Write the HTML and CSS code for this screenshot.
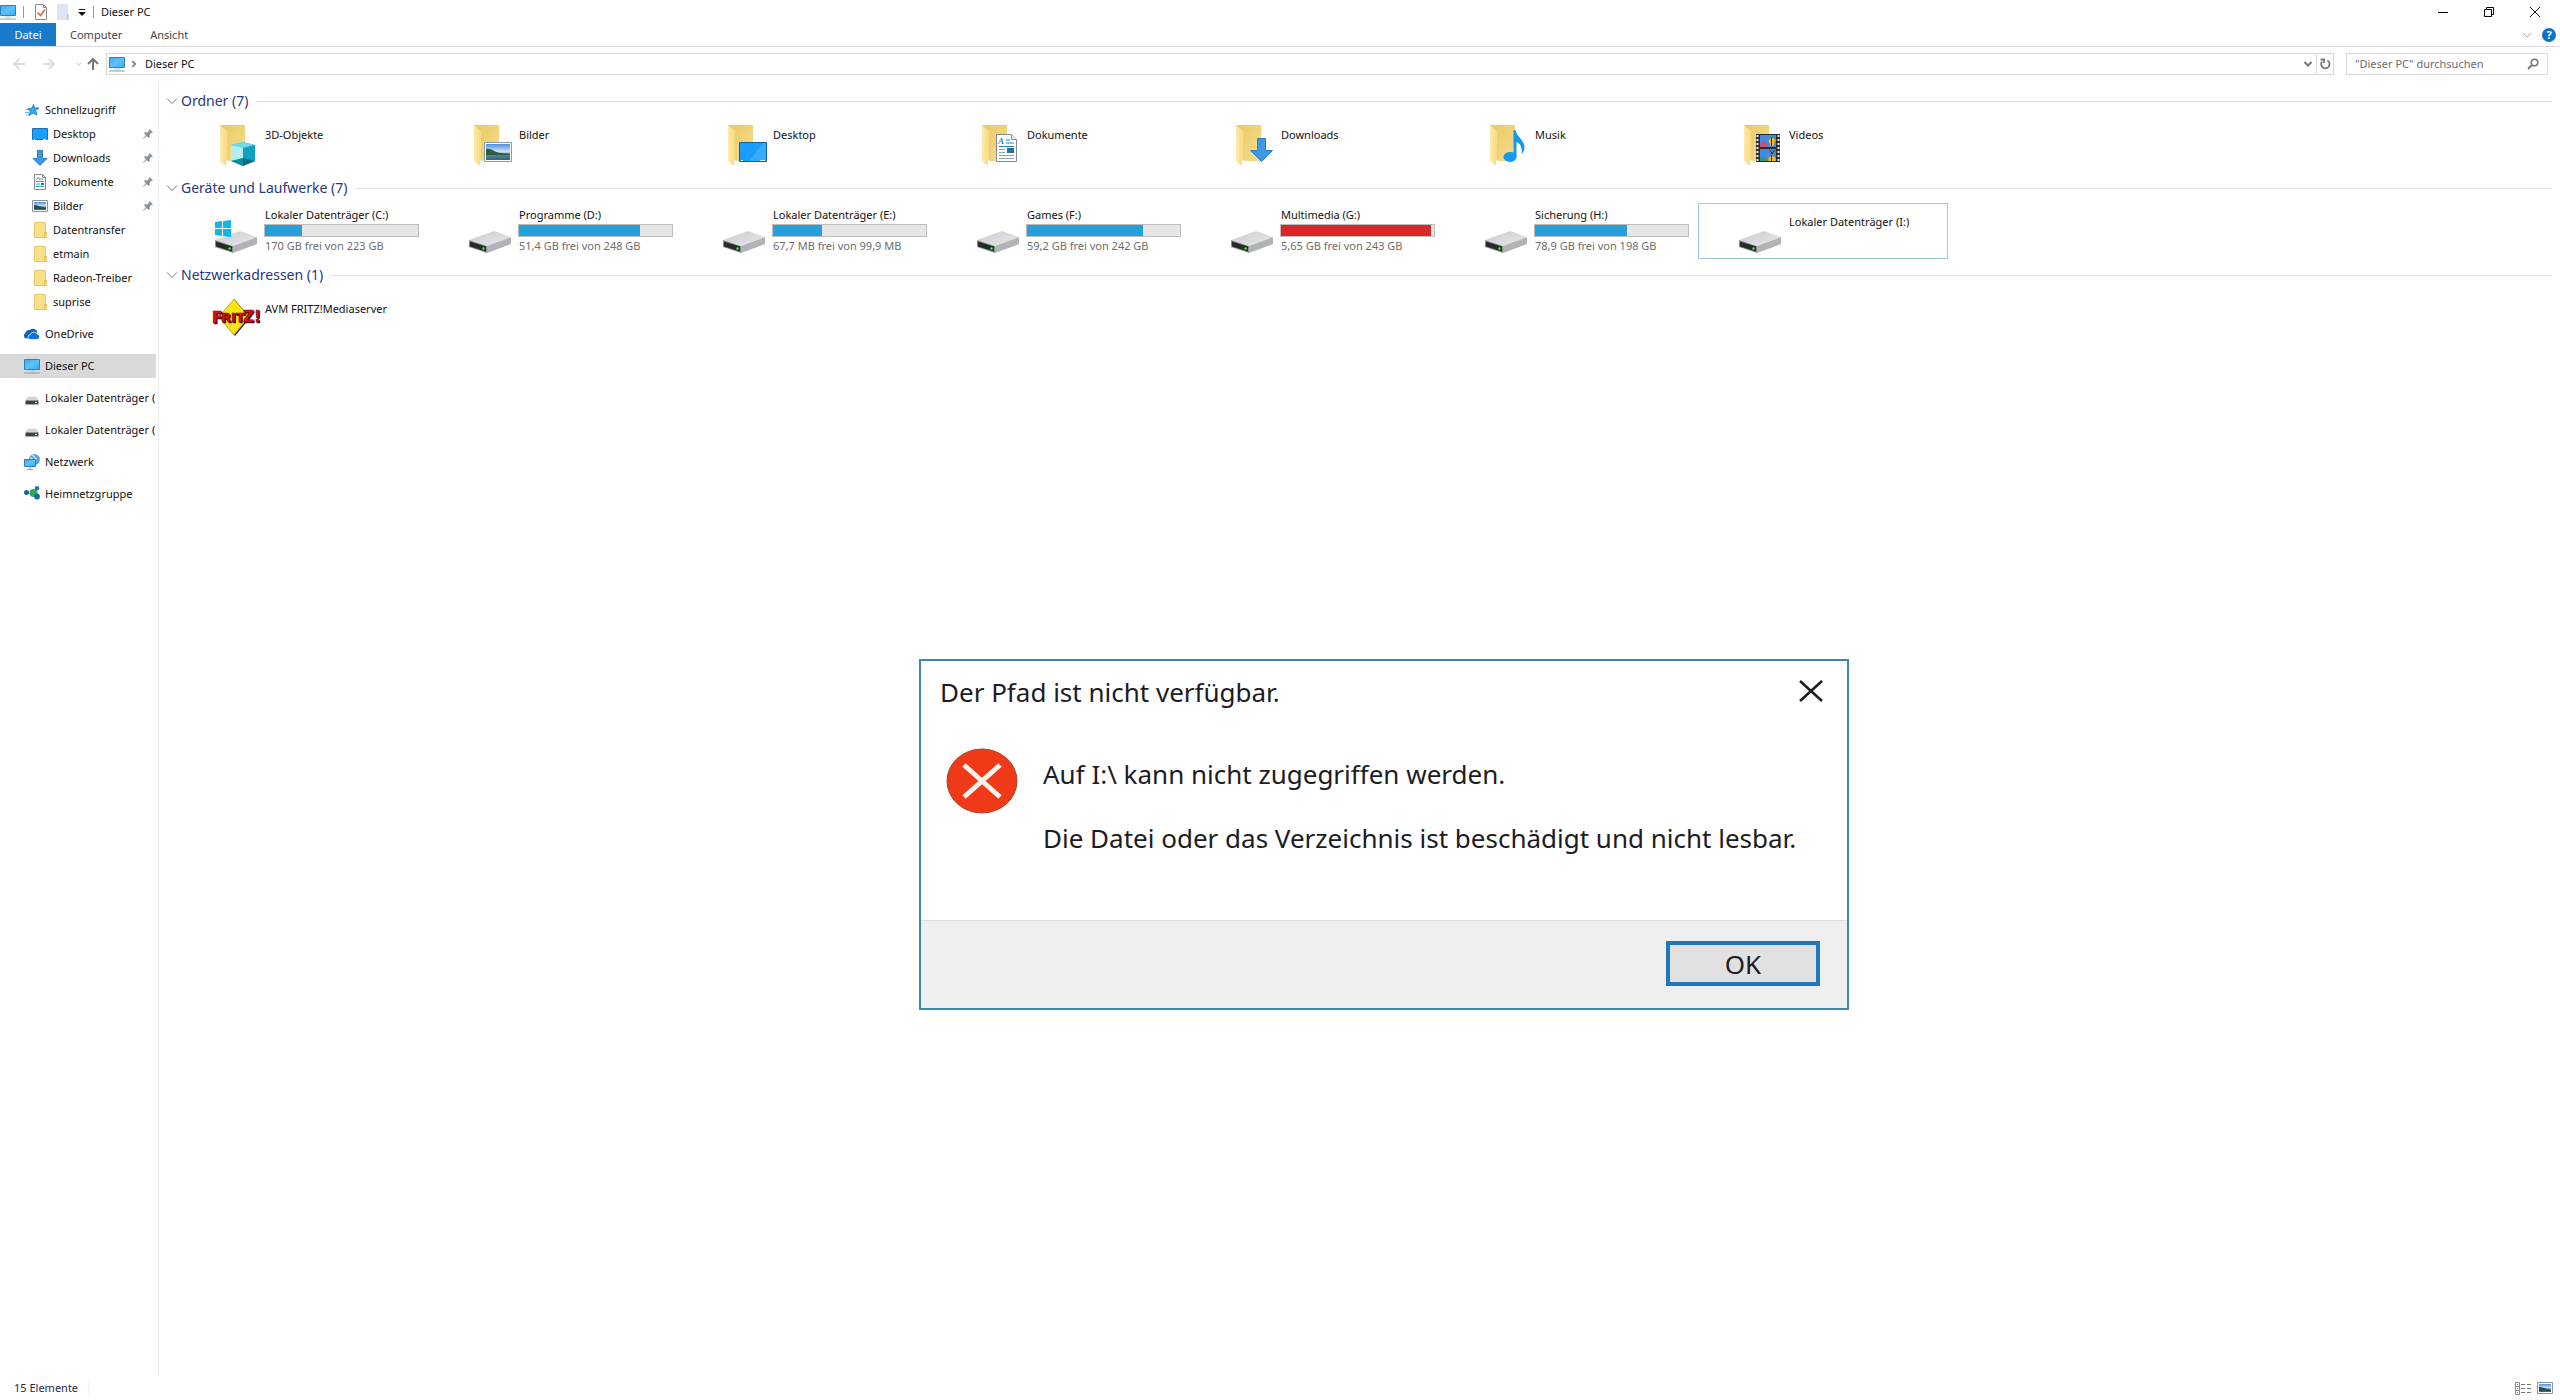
FILE: index.html
```html
<!DOCTYPE html>
<html lang="de">
<head>
<meta charset="utf-8">
<title>Dieser PC</title>
<link rel="stylesheet" href="styles.css">
</head>
<body>
<svg class="defs" aria-hidden="true">
  <defs>
    <linearGradient id="gScreen" x1="0" y1="0" x2="1" y2="1"><stop offset="0" stop-color="#3fa9ee"/><stop offset=".5" stop-color="#5fc2fb"/><stop offset="1" stop-color="#35a7f3"/></linearGradient>
    <linearGradient id="gFolder" x1="0" y1="0" x2="1" y2="1"><stop offset="0" stop-color="#e9c765"/><stop offset="1" stop-color="#f8de8c"/></linearGradient>
    <linearGradient id="gFlap" x1="0" y1="0" x2="1" y2="0"><stop offset="0" stop-color="#ffeaa6"/><stop offset="1" stop-color="#f6d77f"/></linearGradient>
    <linearGradient id="gDrive" x1="0" y1="0" x2="1" y2="1"><stop offset="0" stop-color="#c9cacd"/><stop offset="1" stop-color="#e9eaec"/></linearGradient>
    <linearGradient id="gPhoto" x1="0" y1="0" x2="0" y2="1"><stop offset="0" stop-color="#4d8fdb"/><stop offset=".5" stop-color="#d3e8f8"/><stop offset=".6" stop-color="#5e8f9c"/><stop offset="1" stop-color="#2d6486"/></linearGradient>
  </defs>
  <symbol id="pc" viewBox="0 0 16 16"><path d="M.5 1.500h15v10H.5z" fill="url(#gScreen)" stroke="#2f83b5"/><path d="M5 13h6" stroke="#a8c4d4"/><path d="M0 15h16" stroke="#7f9fb2"/></symbol>
  <symbol id="desk" viewBox="0 0 16 16"><path d="M.5 2.500h15v11H.5z" fill="#18a0fb" stroke="#1373bd"/><path d="M2 13.500h1M11 13.500h3" stroke="#d8efff"/></symbol>
  <symbol id="down" viewBox="0 0 16 16"><path d="M5.500.5h5v8h4.500L8 15.500 1 8.500h4.500z" fill="#3f97e2" stroke="#2c7cc4"/></symbol>
  <symbol id="doc" viewBox="0 0 16 16"><path d="M2.500.5h8l3 3v12h-11z" fill="#fff" stroke="#858b90"/><path d="M10.500.5v3h3" fill="none" stroke="#858b90"/><path d="M4.500 6l2-3 1 3M8 5h3M4 7.500h8M4 10h4M4 12.500h8" fill="none" stroke="#3aa6b4"/><path d="M9 9h3v2H9z" fill="#35708a"/></symbol>
  <symbol id="pic" viewBox="0 0 16 16"><path d="M.5 2.500h15v11H.5z" fill="#fff" stroke="#8b949b"/><path d="M2 4h12v8H2z" fill="url(#gPhoto)"/><path d="M2 7c4 0 7 2 12 3v1H2z" fill="#25504f"/></symbol>
  <symbol id="fold" viewBox="0 0 16 16"><path d="M2.500.5h11v10h1v5h-12z" fill="#fbdf86" stroke="#e9c766"/><path d="M12.500 15v-4.500h2" fill="none" stroke="#e3bd55"/></symbol>
  <symbol id="star" viewBox="0 0 16 16"><path d="M9.500 2.500l1 3.500H15l-3.500 2.500 1.500 4.500-4-2-4 2.500 1.500-4.500-3-2 4.500-.8z" fill="#35a9ef" stroke="#2286c6"/><path d="M1 10.500h4M2 13h3M2 7.500h2" stroke="#62b8ea"/></symbol>
  <symbol id="cloud" viewBox="0 0 16 16"><path d="M2 12.500a3 3 0 0 1-.5-5.500A4 4 0 0 1 6 4a4.500 4.500 0 0 1 7.500 2.500L8 8 6 12.500z" fill="#0a64bd"/><path d="M6.500 13.500a2.500 2.500 0 0 1 0-5 3.500 3.500 0 0 1 6.500-.5 2.800 2.800 0 0 1 .5 5.500z" fill="#1272d2" stroke="#fff" stroke-width=".7"/></symbol>
  <symbol id="disk" viewBox="0 0 16 16"><path d="M3.500 6.500h9l2 4h-13z" fill="#d4d5d6"/><path d="M1.500 10.500h13v3.500h-13z" fill="#3d4244"/><path d="M1.500 14.500h13" stroke="#aaa"/><path d="M11 12.500h2" stroke="#d6f3d0"/></symbol>
  <symbol id="net" viewBox="0 0 16 16"><circle cx="10.500" cy="5.500" r="5.500" fill="#5aa3d2"/><path d="M8 1c3 1 2 4 5 4M6 4c2 0 2 2 4 2" fill="none" stroke="#bfe2ee" stroke-width="1.500"/><path d="M.5 5.500h11v7H.5z" fill="url(#gScreen)" stroke="#2f7fae"/><path d="M6 13v2M3 15.500h6" stroke="#7ba7bf"/></symbol>
  <symbol id="home" viewBox="0 0 16 16"><path d="M3 7l6 1 4-5M9 8l4 5" stroke="#8db8bd" stroke-width="1.500" fill="none"/><circle cx="2.500" cy="6.500" r="2.500" fill="#1c63a5"/><circle cx="9.500" cy="7" r="4" fill="#2fa85a"/><circle cx="13" cy="2.300" r="2.200" fill="#2376a4"/><circle cx="13" cy="10.500" r="2.900" fill="#176b98"/></symbol>
  <symbol id="pin" viewBox="0 0 12 12"><path d="M7.500 1l3.500 3.500-1 .5-.7-.2L7.500 7l.3 2.200-1 .8L4.500 8 1.500 11 1 10.500l2.800-3.200L2 5l.8-.9L5 4.500l2.100-1.800L6.800 2z" fill="#87929c"/></symbol>
  <symbol id="chev" viewBox="0 0 12 12"><path d="M1 3.500l5 5 5-5" fill="none" stroke="currentColor"/></symbol>
  <symbol id="chevb" viewBox="0 0 12 12"><path d="M2.500 4L6 7.500 9.500 4" fill="none" stroke="currentColor" stroke-width="2"/></symbol>
  <symbol id="arrow" viewBox="0 0 14 14"><path d="M13 7H2M7 2L2 7l5 5" fill="none" stroke="currentColor" stroke-width="2"/></symbol>
  <symbol id="cross" viewBox="0 0 12 12"><path d="M1 1l10 10M11 1L1 11" fill="none" stroke="currentColor"/></symbol>
  <symbol id="folder" viewBox="0 0 48 48"><path d="M7 3h25v36H14z" fill="url(#gFolder)"/><path d="M7 3l8 7v28h-2v6l-6-5z" fill="url(#gFlap)"/><path d="M15 10v28" stroke="#e9cb78"/></symbol>
  <symbol id="drive" viewBox="0 0 48 48"><path d="M2 31l25-9 17 6-24 9z" fill="url(#gDrive)"/><path d="M20 37l24-9v7l-24 9z" fill="#b2b3b7"/><path d="M2 31l18 6v7L2 38z" fill="#8b8d90"/><path d="M3 32.500l16 5v5L3 37.500z" fill="#252b29"/><circle cx="16.500" cy="39.500" r="1.200" fill="#5fe04d"/></symbol>
</svg>

<header class="titlebar">
  <svg class="i16"><use href="#pc"/></svg>
  <span class="sep"></span>
  <button class="tool" aria-label="Eigenschaften"><svg class="i16" viewBox="0 0 16 16"><path d="M2.500.5h8l3 3v12h-11z" fill="#fff" stroke="#8a8a8a"/><path d="M10.500.5v3h3" fill="none" stroke="#8a8a8a"/><path d="M4.500 8.500l3 3 4.500-6" fill="none" stroke="#e0632f" stroke-width="1.500"/></svg></button>
  <button class="tool" aria-label="Neuer Ordner"><svg class="i16" viewBox="0 0 16 16"><path d="M2 0h11v10h1v6H2z" fill="#dbe5f3"/><path d="M12.500 15.500v-5h1v5z" fill="#eef3fa" stroke="#c6d3e5"/></svg></button>
  <button class="tool narrow" aria-label="Symbolleiste anpassen"><svg class="i8" viewBox="0 0 8 8"><path d="M1 1.500h6" stroke="#111"/><path d="M0 4h8L4 8z" fill="#111"/></svg></button>
  <span class="sep tight"></span>
  <span class="title">Dieser PC</span>
  <div class="winbtns">
    <button aria-label="Minimieren"><svg class="i12" viewBox="0 0 12 12"><path d="M1 6.500h10" stroke="#000"/></svg></button>
    <button aria-label="Verkleinern"><svg class="i12" viewBox="0 0 12 12"><path d="M1.500 3.500h7v7h-7zM3.500 3V1.500h7v7H9" fill="none" stroke="#000"/></svg></button>
    <button aria-label="Schließen"><svg class="i12"><use href="#cross"/></svg></button>
  </div>
</header>

<nav class="ribbon">
  <button class="file">Datei</button>
  <button>Computer</button>
  <button>Ansicht</button>
  <div class="ribbon-end">
    <button aria-label="Menüband erweitern"><svg class="i10"><use href="#chev"/></svg></button>
    <button class="help" aria-label="Hilfe">?</button>
  </div>
</nav>

<div class="addressrow">
  <div class="history">
    <button class="off" aria-label="Zurück"><svg class="i14"><use href="#arrow"/></svg></button>
    <button class="off" aria-label="Vorwärts"><svg class="i14 right"><use href="#arrow"/></svg></button>
    <button class="off small" aria-label="Verlauf"><svg class="i8"><use href="#chevb"/></svg></button>
    <button class="up" aria-label="Nach oben"><svg class="i14"><use href="#arrow"/></svg></button>
  </div>
  <div class="address">
    <svg class="i16"><use href="#pc"/></svg>
    <svg class="i10 next"><use href="#chevb"/></svg>
    <a href="#">Dieser PC</a>
    <button class="drop" aria-label="Vorherige Orte"><svg class="i12"><use href="#chevb"/></svg></button>
    <button class="reload" aria-label="Aktualisieren"><svg class="i12" viewBox="0 0 12 12"><path d="M8.500 2.500A4.200 4.200 0 1 1 3 3.500M1.500 1.500H5V5" fill="none" stroke="#777" stroke-width="1.800"/></svg></button>
  </div>
  <label class="search">
    <input type="text" placeholder="&quot;Dieser PC&quot; durchsuchen" aria-label="Dieser PC durchsuchen">
    <svg class="i12" viewBox="0 0 12 12"><circle cx="7.500" cy="4.500" r="3.300" fill="none" stroke="#777" stroke-width="1.600"/><path d="M5 7L1 11" stroke="#777" stroke-width="2"/></svg>
  </label>
</div>

<div class="main">
  <nav class="tree">
    <a class="top" href="#"><svg class="i16"><use href="#star"/></svg><span>Schnellzugriff</span></a>
    <a class="sub" href="#"><svg class="i16"><use href="#desk"/></svg><span>Desktop</span><svg class="i12 pin"><use href="#pin"/></svg></a>
    <a class="sub" href="#"><svg class="i16"><use href="#down"/></svg><span>Downloads</span><svg class="i12 pin"><use href="#pin"/></svg></a>
    <a class="sub" href="#"><svg class="i16"><use href="#doc"/></svg><span>Dokumente</span><svg class="i12 pin"><use href="#pin"/></svg></a>
    <a class="sub" href="#"><svg class="i16"><use href="#pic"/></svg><span>Bilder</span><svg class="i12 pin"><use href="#pin"/></svg></a>
    <a class="sub" href="#"><svg class="i16"><use href="#fold"/></svg><span>Datentransfer</span></a>
    <a class="sub" href="#"><svg class="i16"><use href="#fold"/></svg><span>etmain</span></a>
    <a class="sub" href="#"><svg class="i16"><use href="#fold"/></svg><span>Radeon-Treiber</span></a>
    <a class="sub" href="#"><svg class="i16"><use href="#fold"/></svg><span>suprise</span></a>
    <a class="top" href="#"><svg class="i16"><use href="#cloud"/></svg><span>OneDrive</span></a>
    <a class="top current" href="#"><svg class="i16"><use href="#pc"/></svg><span>Dieser PC</span></a>
    <a class="top" href="#"><svg class="i16"><use href="#disk"/></svg><span>Lokaler Datenträger (</span></a>
    <a class="top" href="#"><svg class="i16"><use href="#disk"/></svg><span>Lokaler Datenträger (</span></a>
    <a class="top" href="#"><svg class="i16"><use href="#net"/></svg><span>Netzwerk</span></a>
    <a class="top" href="#"><svg class="i16"><use href="#home"/></svg><span>Heimnetzgruppe</span></a>
  </nav>

  <main class="content">
    <section>
      <h2><svg class="i12"><use href="#chev"/></svg>Ordner (7)</h2>
      <div class="tiles">
        <a class="tile" href="#"><svg class="i48" viewBox="0 0 48 48"><use href="#folder"/><path d="M18 23l12-3 12 3v16l-12 5-12-5z" fill="#2bbdd3"/><path d="M18 23l12-3 12 3-12 3z" fill="#6fd8e4"/><path d="M18 23l12 3v10l-12 3z" fill="#b5ecf0"/><path d="M30 26l12-3v16l-12-3z" fill="#12a0c0"/><path d="M18 39l12-3v8z" fill="#0f8b99"/><path d="M42 39l-12-3v8z" fill="#076a80"/></svg><span class="name">3D-Objekte</span></a>
        <a class="tile" href="#"><svg class="i48" viewBox="0 0 48 48"><use href="#folder"/><path d="M17.500 20.500h27v19h-27z" fill="#fff" stroke="#8b9aa5"/><path d="M19 22h24v16H19z" fill="url(#gPhoto)"/><path d="M19 27c5-1 8 3 14 4l10 1v1H19z" fill="#2e5b3d"/></svg><span class="name">Bilder</span></a>
        <a class="tile" href="#"><svg class="i48" viewBox="0 0 48 48"><use href="#folder"/><path d="M18.500 20.500h27v19h-27z" fill="#1b9dfb" stroke="#0f5f9e"/><path d="M28 39L42 21h3v18z" fill="#38abff"/><path d="M20 38.500h2M39 38.500h5" stroke="#e3f3ff"/></svg><span class="name">Desktop</span></a>
        <a class="tile" href="#"><svg class="i48" viewBox="0 0 48 48"><use href="#folder"/><path d="M21.500 12.500h15l5 5v22h-20z" fill="#fff" stroke="#858b90"/><path d="M36.500 12.500v5h5" fill="#eee" stroke="#858b90"/><text class="glyph" x="23" y="22">A</text><path d="M31 18h4M31 21h8M24 24.500h15" stroke="#1f8bb5"/><path d="M24 27.500h6M24 30.500h6M24 33.500h15M24 36.500h15" stroke="#8fa0ad"/><path d="M32 26h7v5h-7z" fill="#2f6f92"/></svg><span class="name">Dokumente</span></a>
        <a class="tile" href="#"><svg class="i48" viewBox="0 0 48 48"><use href="#folder"/><path d="M28.500 16.500h8v12h7L32.500 39.500l-11-11h7z" fill="#3d98e6" stroke="#2c80ca"/></svg><span class="name">Downloads</span></a>
        <a class="tile" href="#"><svg class="i48" viewBox="0 0 48 48"><use href="#folder"/><ellipse cx="27" cy="35" rx="6.500" ry="5" fill="#109af0"/><path d="M30.500 35V8h2c1 7 9 10 9 17 0 4-2 6-3 7 1-7-1-10-5-12v15z" fill="#109af0"/></svg><span class="name">Musik</span></a>
        <a class="tile" href="#"><svg class="i48" viewBox="0 0 48 48"><use href="#folder"/><path d="M19 12h24v28H19z" fill="#2c2c2c"/><path d="M20.500 13v27M41.500 13v27" stroke="#eee" stroke-width="2" stroke-dasharray="2 2"/><path d="M23 13h16v12H23zM23 27h16v12H23z" fill="#4689e0"/><path d="M23 21l5-2 3 6h-8z" fill="#c7527f"/><path d="M23 35l6 1 3 3h-9z" fill="#3a9366"/><path d="M34.500 15l4 3-2 6h-3l-2-5zM34.500 33l4 3v3h-7v-3z" fill="#f3bb24"/><path d="M34.500 15v9M33 28l2 4 3-4M34.500 33v6" stroke="#4a2410" fill="none"/></svg><span class="name">Videos</span></a>
      </div>
    </section>
    <section>
      <h2><svg class="i12"><use href="#chev"/></svg>Geräte und Laufwerke (7)</h2>
      <div class="tiles">
        <a class="tile" href="#"><svg class="i48" viewBox="0 0 48 48"><use href="#drive"/><path d="M2 13l7-1v7H2zM10 12l8-1v8h-8zM2 20h7v7l-7-1zM10 20h8v8l-8-1z" fill="#0cb7ec"/></svg><span class="drive"><span>Lokaler Datenträger (C:)</span><span class="bar"><i style="width:24%"></i></span><small>170 GB frei von 223 GB</small></span></a>
        <a class="tile" href="#"><svg class="i48"><use href="#drive"/></svg><span class="drive"><span>Programme (D:)</span><span class="bar"><i style="width:79%"></i></span><small>51,4 GB frei von 248 GB</small></span></a>
        <a class="tile" href="#"><svg class="i48"><use href="#drive"/></svg><span class="drive"><span>Lokaler Datenträger (E:)</span><span class="bar"><i style="width:32%"></i></span><small>67,7 MB frei von 99,9 MB</small></span></a>
        <a class="tile" href="#"><svg class="i48"><use href="#drive"/></svg><span class="drive"><span>Games (F:)</span><span class="bar"><i style="width:76%"></i></span><small>59,2 GB frei von 242 GB</small></span></a>
        <a class="tile" href="#"><svg class="i48"><use href="#drive"/></svg><span class="drive"><span>Multimedia (G:)</span><span class="bar full"><i style="width:98%"></i></span><small>5,65 GB frei von 243 GB</small></span></a>
        <a class="tile" href="#"><svg class="i48"><use href="#drive"/></svg><span class="drive"><span>Sicherung (H:)</span><span class="bar"><i style="width:60%"></i></span><small>78,9 GB frei von 198 GB</small></span></a>
        <a class="tile focused" href="#"><svg class="i48"><use href="#drive"/></svg><span class="name">Lokaler Datenträger (I:)</span></a>
      </div>
    </section>
    <section>
      <h2><svg class="i12"><use href="#chev"/></svg>Netzwerkadressen (1)</h2>
      <div class="tiles">
        <a class="tile" href="#"><svg class="i48" viewBox="0 0 48 48"><path d="M22 4l15 18-15 18L8 22z" fill="#222"/><path d="M21 3l15 18-15 18L6 21z" fill="#ffe411" stroke="#8a7a10" stroke-width=".6"/><g class="fritz shade"><text class="big" x="0" y="28">F</text><text x="9" y="27">RIT</text><text class="big" x="31" y="27">Z!</text></g><g class="fritz"><text class="big" x="-1" y="27">F</text><text x="8" y="26">RIT</text><text class="big" x="30" y="26">Z!</text></g></svg><span class="name">AVM FRITZ!Mediaserver</span></a>
      </div>
    </section>
  </main>
</div>

<footer class="status">
  <span class="count">15 Elemente</span>
  <div class="views">
    <button aria-label="Details"><svg class="i16" viewBox="0 0 16 16"><path d="M.5 2.500h4v12h-4zM.5 6.500h4M.5 10.500h4" fill="none" stroke="#8a8a8a"/><path d="M2 4.500h1M2 8.500h1M2 12.500h1M6 4.500h4M12 4.500h4M6 8.500h4M12 8.500h4M6 12.500h4M12 12.500h4" stroke="#777"/></svg></button>
    <button aria-label="Kacheln"><svg class="i16"><use href="#pic"/></svg></button>
  </div>
</footer>

<div class="dialog" role="alertdialog" aria-labelledby="dlg-title" aria-describedby="dlg-text">
  <div class="dlg-head">
    <span id="dlg-title">Der Pfad ist nicht verfügbar.</span>
    <button aria-label="Schließen"><svg class="x" viewBox="0 0 26 26"><path d="M2 2l22 20M24 2L2 22" stroke="#1c1c1c" stroke-width="2.500" fill="none"/></svg></button>
  </div>
  <div class="dlg-body">
    <svg class="error" viewBox="0 0 72 66"><ellipse cx="36" cy="33" rx="35" ry="32" fill="#f03a17" stroke="#a8452c"/><path d="M18 17l36 32M54 17L18 49" stroke="#fff5ee" stroke-width="5"/></svg>
    <div id="dlg-text"><p>Auf I:\ kann nicht zugegriffen werden.</p><p>Die Datei oder das Verzeichnis ist beschädigt und nicht lesbar.</p></div>
  </div>
  <div class="dlg-foot"><button class="ok">OK</button></div>
</div>
</body>
</html>
```
FILE: styles.css
```css
* { box-sizing: border-box; }
body {
  margin: 0;
  min-height: 100vh;
  display: flex;
  flex-direction: column;
  background: #fff;
  color: #111;
  font: 11px/16px "Noto Sans", "Open Sans", sans-serif;
}
a { color: inherit; text-decoration: none; }
button {
  margin: 0;
  padding: 0;
  border: 0;
  background: none;
  color: inherit;
  font: inherit;
  display: flex;
  align-items: center;
  justify-content: center;
}
svg { flex: none; display: block; overflow: visible; }
.defs { position: absolute; width: 0; height: 0; }
.i8 { width: 8px; height: 8px; }
.i10 { width: 10px; height: 10px; }
.i12 { width: 12px; height: 12px; }
.i14 { width: 14px; height: 14px; }
.i16 { width: 16px; height: 16px; }
.i48 { width: 48px; height: 48px; }

/* Title bar */
.titlebar { display: flex; align-items: center; height: 23px; }
.sep { width: 1px; height: 12px; margin: 0 6px 0 7px; background: #999; }
.sep.tight { margin: 0 7px 0 3px; }
.tool { width: 22px; }
.tool.narrow { width: 16px; }
.winbtns { display: flex; margin-left: auto; padding-right: 2px; }
.winbtns button { width: 46px; height: 20px; }

/* Ribbon tabs */
.ribbon {
  display: flex;
  height: 24px;
  border-bottom: 1px solid #dadbdc;
  color: #444;
}
.ribbon > button { padding: 0 14px; }
.ribbon > .file { width: 56px; background: #1979ca; color: #fff; }
.ribbon-end { display: flex; align-items: center; gap: 10px; margin-left: auto; padding-right: 4px; color: #999; }
.ribbon-end .help {
  width: 14px;
  height: 14px;
  border-radius: 50%;
  background: #0f72c9;
  color: #fff;
  font-weight: 700;
}

/* Address row */
.addressrow { display: flex; align-items: center; height: 34px; padding: 0 12px; }
.history { display: flex; align-items: center; width: 94px; color: #777; }
.history button { flex: none; width: 30px; justify-content: flex-start; }
.history .off { color: #dcdcdc; }
.history .small { width: 14px; justify-content: center; }
.history .up { width: 20px; }
.right { transform: rotate(180deg); }
.up svg { transform: rotate(90deg); }
.next { transform: rotate(-90deg); color: #777; margin: 0 6px 0 4px; }
.address {
  flex: 1;
  display: flex;
  align-items: center;
  height: 22px;
  border: 1px solid #d9d9d9;
  padding-left: 2px;
}
.address .drop { width: 16px; margin-left: auto; color: #777; }
.address .reload { width: 17px; height: 20px; border-left: 1px solid #d9d9d9; }
.search {
  display: flex;
  align-items: center;
  width: 202px;
  height: 22px;
  margin-left: 12px;
  padding: 0 8px;
  border: 1px solid #d9d9d9;
}
.search input { flex: 1; min-width: 0; border: 0; padding: 0; font: inherit; outline: 0; }
.search input::placeholder { color: #6d6d6d; opacity: 1; }

/* Body */
.main { flex: 1; display: flex; }
.tree { width: 159px; padding-top: 17px; border-right: 1px solid #f0f0f0; }
.tree a {
  display: flex;
  align-items: center;
  height: 24px;
  margin-right: 2px;
  padding-left: 24px;
  gap: 5px;
  overflow: hidden;
  white-space: nowrap;
}
.tree .sub { padding-left: 32px; }
.tree .top ~ .top { margin-top: 8px; }
.tree .current { background: #d9d9d9; }
.tree .pin { margin-left: auto; margin-right: 2px; }
.content { flex: 1; min-width: 0; padding: 5px 8px 0 7px; }
section { margin-bottom: 1px; }
h2 {
  display: flex;
  align-items: center;
  gap: 3px;
  height: 30px;
  margin: 0;
  color: #27387f;
  font-size: 14px;
  font-weight: 400;
}
h2 svg { color: #777; }
h2::after { content: ""; flex: 1; height: 1px; margin-left: 5px; background: #e2e2e2; }
.tiles { display: flex; flex-wrap: wrap; gap: 4px; padding-left: 8px; }
.tile {
  display: flex;
  gap: 4px;
  width: 250px;
  height: 56px;
  padding: 5px 0 0 38px;
  border: 1px solid transparent;
}
.tile.focused { border-color: #9ccfda; }
.name { padding-top: 5px; }
.drive { display: flex; flex-direction: column; margin-top: -2px; }
.drive small { font-size: 11px; color: #6d6d6d; }
.bar { width: 155px; height: 13px; margin: 1px 0 1px -1px; border: 1px solid #bcbcbc; background: #e6e6e6; }
.bar i { display: block; height: 100%; background: #26a0da; }
.bar.full i { background: #da2626; }
.glyph { font: italic 700 9px "Liberation Serif", serif; fill: #1f8bb5; }
.fritz { font: 700 13px "DejaVu Sans", sans-serif; fill: #d8121c; stroke: #6e0a10; stroke-width: .6px; }
.fritz .big { font-size: 15px; }
.fritz.shade { fill: #220000; }

/* Status bar */
.status { display: flex; align-items: center; justify-content: space-between; height: 24px; padding: 0 7px 0 14px; color: #1e2a4a; }
.count { padding-right: 10px; border-right: 1px solid #f0f0f0; }
.views { display: flex; gap: 6px; }

/* Error dialog floating over the window */
.dialog {
  position: absolute;
  left: 919px;
  top: 659px;
  width: 930px;
  display: flex;
  flex-direction: column;
  border: 2px solid #3f86b0;
  background: #fff;
  color: #1c1c24;
  font-size: 26px;
  line-height: 32px;
}
.dlg-head { display: flex; align-items: center; justify-content: space-between; height: 62px; padding: 0 23px 0 19px; }
.x { width: 26px; height: 26px; }
.dlg-body { display: flex; gap: 25px; height: 197px; padding: 25px; }
.error { width: 72px; height: 66px; }
.dlg-body p { margin: 10px 0 32px; white-space: nowrap; }
.dlg-body p + p { margin: 0; }
.dlg-foot {
  display: flex;
  align-items: center;
  justify-content: flex-end;
  height: 88px;
  padding: 0 27px 2px 0;
  border-top: 1px solid #dcdcdc;
  background: #efefef;
}
.ok { width: 154px; height: 45px; border: 4px solid #2277b8; background: #e1e1e1; }
```
